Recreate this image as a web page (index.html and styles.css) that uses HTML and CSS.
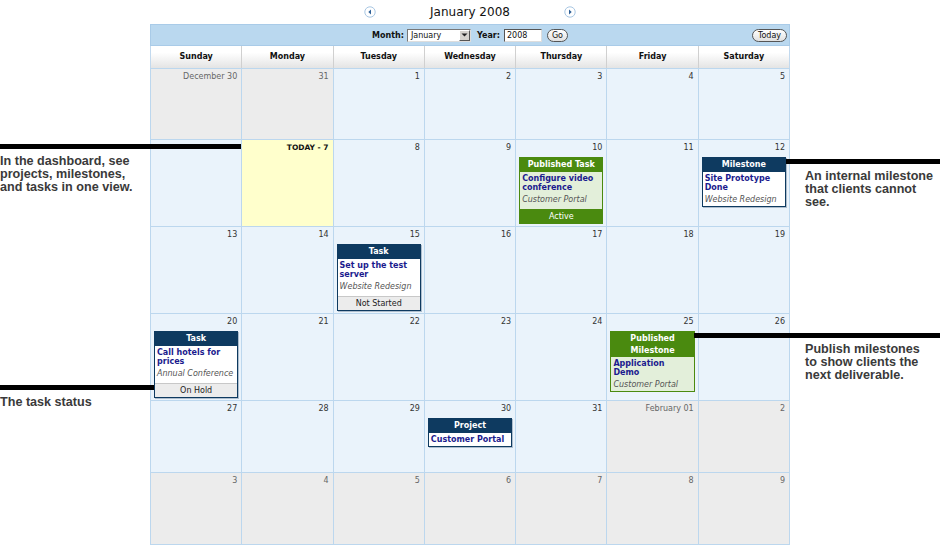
FILE: index.html
```html
<!DOCTYPE html>
<html>
<head>
<meta charset="utf-8">
<title>Calendar</title>
<link rel="stylesheet" href="styles.css">
</head>
<body>
<div class="page">
  <div class="cal">
    <div class="titlebar">
      <span class="nav"><svg viewBox="0 0 12 12" width="12" height="12"><circle cx="6" cy="6" r="5.2" fill="#fff" stroke="#a9c7e3" stroke-width="1"/><path d="M7 3.6 L4.3 6 L7 8.4 Z" fill="#2d5f96"/></svg></span>
      <span class="title">January 2008</span>
      <span class="nav"><svg viewBox="0 0 12 12" width="12" height="12"><circle cx="6" cy="6" r="5.2" fill="#fff" stroke="#a9c7e3" stroke-width="1"/><path d="M5 3.6 L7.7 6 L5 8.4 Z" fill="#2d5f96"/></svg></span>
    </div>
    <div class="toolbar">
      <div class="controls">
        <span class="lbl">Month:</span>
        <span class="select"><span class="sel-text">January</span><span class="sel-btn"><svg viewBox="0 0 7 4" width="7" height="4"><path d="M0.5 0.5 H6.5 L3.5 3.5 Z" fill="#222"/></svg></span></span>
        <span class="lbl yr">Year:</span>
        <span class="input">2008</span>
        <span class="btn go">Go</span>
      </div>
      <span class="btn today">Today</span>
    </div>
    <div class="dayhead">
      <div>Sunday</div><div>Monday</div><div>Tuesday</div><div>Wednesday</div><div>Thursday</div><div>Friday</div><div>Saturday</div>
    </div>
    <div class="month">
      <div class="cell oth"><div class="num">December 30</div></div>
      <div class="cell oth"><div class="num">31</div></div>
      <div class="cell"><div class="num">1</div></div>
      <div class="cell"><div class="num">2</div></div>
      <div class="cell"><div class="num">3</div></div>
      <div class="cell"><div class="num">4</div></div>
      <div class="cell"><div class="num">5</div></div>

      <div class="cell"><div class="num covered">6</div></div>
      <div class="cell tod"><div class="num tnum">TODAY - 7</div></div>
      <div class="cell"><div class="num">8</div></div>
      <div class="cell"><div class="num">9</div></div>
      <div class="cell"><div class="num">10</div>
        <div class="card pub">
          <div class="card-h">Published Task</div>
          <div class="card-b"><div class="card-t">Configure video conference</div><div class="card-p">Customer Portal</div></div>
          <div class="card-s">Active</div>
        </div>
      </div>
      <div class="cell"><div class="num">11</div></div>
      <div class="cell"><div class="num">12</div>
        <div class="card">
          <div class="card-h">Milestone</div>
          <div class="card-b"><div class="card-t">Site Prototype Done</div><div class="card-p">Website Redesign</div></div>
        </div>
      </div>

      <div class="cell"><div class="num">13</div></div>
      <div class="cell"><div class="num">14</div></div>
      <div class="cell"><div class="num">15</div>
        <div class="card">
          <div class="card-h">Task</div>
          <div class="card-b"><div class="card-t">Set up the test server</div><div class="card-p">Website Redesign</div></div>
          <div class="card-s">Not Started</div>
        </div>
      </div>
      <div class="cell"><div class="num">16</div></div>
      <div class="cell"><div class="num">17</div></div>
      <div class="cell"><div class="num">18</div></div>
      <div class="cell"><div class="num">19</div></div>

      <div class="cell"><div class="num">20</div>
        <div class="card">
          <div class="card-h">Task</div>
          <div class="card-b"><div class="card-t">Call hotels for prices</div><div class="card-p">Annual Conference</div></div>
          <div class="card-s">On Hold</div>
        </div>
      </div>
      <div class="cell"><div class="num">21</div></div>
      <div class="cell"><div class="num">22</div></div>
      <div class="cell"><div class="num">23</div></div>
      <div class="cell"><div class="num">24</div></div>
      <div class="cell"><div class="num">25</div>
        <div class="card pub">
          <div class="card-h">Published Milestone</div>
          <div class="card-b"><div class="card-t">Application Demo</div><div class="card-p">Customer Portal</div></div>
        </div>
      </div>
      <div class="cell"><div class="num">26</div></div>

      <div class="cell"><div class="num">27</div></div>
      <div class="cell"><div class="num">28</div></div>
      <div class="cell"><div class="num">29</div></div>
      <div class="cell"><div class="num">30</div>
        <div class="card">
          <div class="card-h">Project</div>
          <div class="card-b proj"><div class="card-t">Customer Portal</div></div>
        </div>
      </div>
      <div class="cell"><div class="num">31</div></div>
      <div class="cell oth"><div class="num">February 01</div></div>
      <div class="cell oth"><div class="num">2</div></div>

      <div class="cell oth"><div class="num">3</div></div>
      <div class="cell oth"><div class="num">4</div></div>
      <div class="cell oth"><div class="num">5</div></div>
      <div class="cell oth"><div class="num">6</div></div>
      <div class="cell oth"><div class="num">7</div></div>
      <div class="cell oth"><div class="num">8</div></div>
      <div class="cell oth"><div class="num">9</div></div>
    </div>
  </div>

  <div class="callout-line l1"></div>
  <div class="callout-text t1">In the dashboard, see<br>projects, milestones,<br>and tasks in one view.</div>
  <div class="callout-line l2"></div>
  <div class="callout-text t2">An internal milestone<br>that clients cannot<br>see.</div>
  <div class="callout-line l3"></div>
  <div class="callout-text t3">Publish milestones<br>to show clients the<br>next deliverable.</div>
  <div class="callout-line l4"></div>
  <div class="callout-text t4">The task status</div>
</div>
</body>
</html>
```

FILE: styles.css
```css
* { box-sizing: border-box; }
body {
  margin: 0;
  background: #fff;
  font-family: "DejaVu Sans", Verdana, sans-serif;
  color: #222;
}
.page {
  position: relative;
  width: 940px;
  height: 545px;
  overflow: hidden;
}
.cal {
  margin-left: 150px;
  width: 640px;
}
.titlebar {
  height: 24px;
  display: flex;
  align-items: center;
  justify-content: center;
  gap: 54px;
}
.title {
  font-size: 12px;
  color: #111;
}
.nav { width: 12px; height: 12px; display: block; }
.nav svg { display: block; }

.toolbar {
  height: 22px;
  background: #bad8ef;
  border: 1px solid #a9cbe8;
  display: grid;
  grid-template-columns: 1fr auto 1fr;
  align-items: center;
  padding: 0 2px;
}
.controls {
  grid-column: 2;
  display: flex;
  align-items: center;
}
.lbl {
  font-size: 8px;
  font-weight: bold;
  color: #111;
  margin-right: 3px;
}
.lbl.yr { margin-left: 6px; margin-right: 4px; }
.select {
  display: flex;
  width: 64px;
  height: 13px;
  border: 1px solid;
  border-color: #777 #ddd #ddd #777;
  background: #fff;
}
.sel-text {
  flex: 1;
  font-size: 8px;
  line-height: 11px;
  padding-left: 3px;
  color: #111;
}
.sel-btn {
  width: 11px;
  height: 11px;
  background: #d6d3ce;
  border: 1px solid;
  border-color: #fff #555 #555 #fff;
  display: flex;
  align-items: center;
  justify-content: center;
}
.sel-btn svg { display: block; }
.input {
  width: 38px;
  height: 13px;
  border: 1px solid;
  border-color: #555 #ddd #ddd #555;
  background: #fff;
  font-size: 8px;
  line-height: 11px;
  padding-left: 2px;
  color: #111;
}
.btn {
  display: inline-block;
  height: 13px;
  border: 1px solid #555;
  border-radius: 7px;
  background: linear-gradient(#ffffff, #e0e0e0);
  font-size: 8px;
  line-height: 11px;
  text-align: center;
  color: #111;
}
.go { width: 21px; margin-left: 5px; }
.today { grid-column: 3; justify-self: end; width: 35px; }

.dayhead {
  display: grid;
  grid-template-columns: repeat(7, 1fr);
  gap: 1px;
  background: #d0d0d0;
  border-left: 1px solid #c2d9ee;
  border-right: 1px solid #c2d9ee;
  height: 22px;
}
.dayhead div {
  background: linear-gradient(#ffffff 30%, #e4e4e4);
  font-size: 8px;
  font-weight: bold;
  line-height: 22px;
  text-align: center;
  color: #111;
}

.month {
  display: grid;
  grid-template-columns: repeat(7, 1fr);
  grid-template-rows: 70px 86px 86px 86px 71px 71px;
  gap: 1px;
  background: #bcd7ee;
  border: 1px solid #bcd7ee;
}
.cell {
  background: #eaf3fb;
  padding: 3px 3px 0;
  min-width: 0;
}
.cell.oth { background: #ececec; }
.cell.oth .num { color: #666; }
.cell.tod { background: #ffffcc; }
.num {
  font-size: 8px;
  line-height: 10px;
  text-align: right;
  padding-right: 1px;
  color: #333;
  white-space: nowrap;
}
.num.covered { visibility: hidden; }
.num.tnum {
  font-weight: bold;
  color: #111;
  font-size: 7.5px;
}

.card {
  margin-top: 4px;
  border: 1px solid #0e3a60;
  background: #fff;
  box-shadow: 1px 1px 0 rgba(60, 90, 120, 0.35);
}
.card-h {
  background: #0e3a60;
  color: #fff;
  font-weight: bold;
  font-size: 8px;
  line-height: 14px;
  text-align: center;
}
.card.pub .card-h { line-height: 11.5px; padding: 1px 6px; }
.card-b { padding: 2px 2px 1px; }
.card-b.proj { padding: 2px 2px 2px; }
.card-t {
  color: #1b1b8e;
  font-weight: bold;
  font-size: 8px;
  line-height: 9px;
}
.card-p {
  color: #555;
  font-style: italic;
  font-size: 8px;
  line-height: 11px;
  margin-top: 2px;
  white-space: nowrap;
}
.card-s {
  text-align: center;
  font-size: 8px;
  line-height: 13px;
  margin-top: 3px;
  background: #ececec;
  border-top: 1px solid #c8c8c8;
  color: #222;
}
.card.pub { border-color: #4a8a0f; box-shadow: none; }
.card.pub .card-h { background: #4a8a0f; }
.card.pub .card-b { background: #e3efda; }
.card.pub .card-s { background: #4a8a0f; color: #fff; border-top-color: #4a8a0f; margin-top: 0; }
.card.pub .card-b:has(+ .card-s) { padding-bottom: 4px; }

.callout-line {
  position: absolute;
  height: 5px;
  background: #000;
}
.l1 { left: 0; top: 144px; width: 241px; }
.l2 { left: 786px; top: 159px; width: 154px; }
.l3 { left: 694px; top: 333px; width: 246px; }
.l4 { left: 0; top: 385px; width: 154px; }
.callout-text {
  position: absolute;
  font-family: "Liberation Sans", Arial, sans-serif;
  font-weight: bold;
  font-size: 12.6px;
  line-height: 13px;
  color: #3a3a3a;
  white-space: nowrap;
}
.t1 { left: 0; top: 155px; }
.t2 { left: 805px; top: 170px; }
.t3 { left: 805px; top: 343px; }
.t4 { left: 0; top: 396px; }
```
